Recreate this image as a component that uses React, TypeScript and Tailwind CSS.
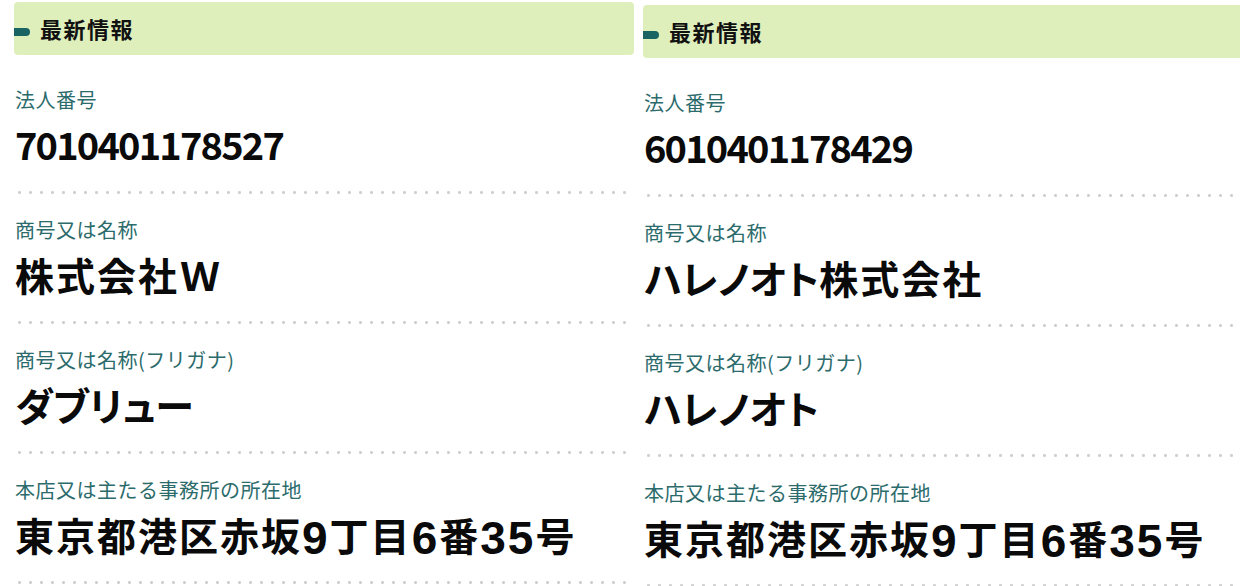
import type { ReactNode } from "react";

type Field = {
  label: string;
  value: string;
  numeric?: boolean;
};

type Company = {
  id: string;
  offset: "top" | "low";
  fields: Field[];
};

const companies: Company[] = [
  {
    id: "7010401178527",
    offset: "top",
    fields: [
      { label: "法人番号", value: "7010401178527", numeric: true },
      { label: "商号又は名称", value: "株式会社Ｗ" },
      { label: "商号又は名称(フリガナ)", value: "ダブリュー" },
      { label: "本店又は主たる事務所の所在地", value: "東京都港区赤坂9丁目6番35号" },
    ],
  },
  {
    id: "6010401178429",
    offset: "low",
    fields: [
      { label: "法人番号", value: "6010401178429", numeric: true },
      { label: "商号又は名称", value: "ハレノオト株式会社" },
      { label: "商号又は名称(フリガナ)", value: "ハレノオト" },
      { label: "本店又は主たる事務所の所在地", value: "東京都港区赤坂9丁目6番35号" },
    ],
  },
];

const fontJp = "font-['Noto_Sans_CJK_JP','Noto_Sans',sans-serif]";

// kana runs sit tighter than kanji, digits inside an address use a wider latin face
function typeset(value: string): ReactNode[] {
  return value.split(/([\u3040-\u30ff]+|[0-9]+)/).map((part, i) => {
    if (!part) return null;
    if (/^[0-9]+$/.test(part)) {
      return (
        <span key={i} className="align-[-3px] font-['Liberation_Sans',sans-serif] text-[46px] tracking-[2px]">
          {part}
        </span>
      );
    }
    if (/^[\u3040-\u30ff]+$/.test(part)) {
      return (
        <span key={i} className="tracking-normal">
          {part}
        </span>
      );
    }
    return <span key={i}>{part}</span>;
  });
}

export default function App() {
  return (
    <div className={`flex h-[586px] w-[1240px] overflow-hidden bg-white ${fontJp}`}>
      {companies.map((company, index) => (
        <CompanyPanel key={company.id} company={company} first={index === 0} />
      ))}
    </div>
  );
}

function CompanyPanel({ company, first }: { company: Company; first: boolean }) {
  return (
    <section
      className={`w-[620px] shrink-0 ${first ? "ml-[14px]" : "ml-[9px]"} ${
        company.offset === "top" ? "pt-[2px]" : "pt-[5px]"
      }`}
    >
      <header className="flex h-[53px] items-center rounded-[4px] bg-[#dfefbc]">
        <span className="mt-[6px] h-[8px] w-[16px] rounded-r-full bg-[#1a6464]" />
        <h2 className="ml-[10px] text-[22px] font-bold tracking-[1.5px] text-[#111]">最新情報</h2>
      </header>

      <dl className="mt-[9px]">
        {company.fields.map((field) => (
          <div key={field.label}>
            <div className="pt-[26px] pb-[25px] pl-px">
              <dt className="h-[20px] text-[20px] leading-[20px] tracking-[0.5px] whitespace-nowrap text-[#2c6b6b]">
                {field.label}
              </dt>
              <dd
                className={`mt-[12px] h-[44px] leading-[44px] font-bold whitespace-nowrap text-[#0a0a0a] ${
                  field.numeric
                    ? "text-[38px] tracking-[-1.8px]"
                    : "text-[39px] tracking-[2px] [font-feature-settings:'palt']"
                }`}
              >
                {field.numeric ? field.value : typeset(field.value)}
              </dd>
            </div>
            {/* dotted rule between fields */}
            <div className="h-[3px] bg-[radial-gradient(circle,#cfcfcf_1.3px,transparent_1.6px)] bg-[length:11px_3px] bg-repeat-x" />
          </div>
        ))}
      </dl>
    </section>
  );
}
